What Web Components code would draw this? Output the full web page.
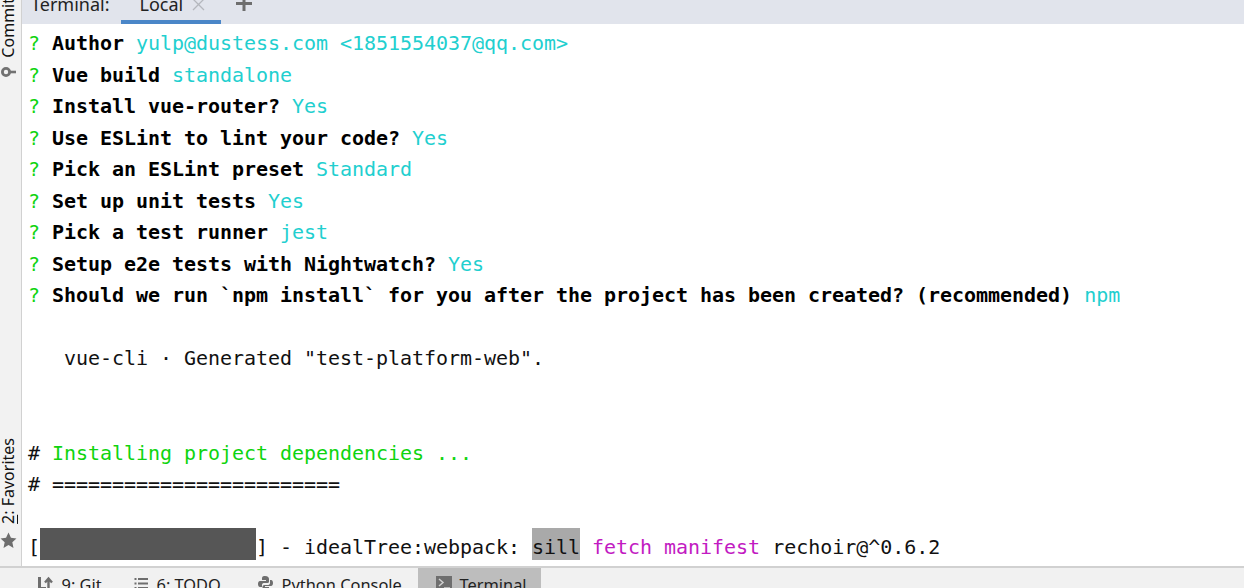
<!DOCTYPE html>
<html><head><meta charset="utf-8"><style>
html,body{margin:0;padding:0;width:1244px;height:588px;overflow:hidden;background:#fff}
</style></head><body>
<ide-frame>
  <side-bar slot="side"></side-bar>
  <top-tabs slot="top"></top-tabs>
  <term-view slot="main">
    <term-line><i class="g">?</i> <b>Author</b> <i class="c">yulp@dustess.com &lt;1851554037@qq.com&gt;</i></term-line>
    <term-line><i class="g">?</i> <b>Vue build</b> <i class="c">standalone</i></term-line>
    <term-line><i class="g">?</i> <b>Install vue-router?</b> <i class="c">Yes</i></term-line>
    <term-line><i class="g">?</i> <b>Use ESLint to lint your code?</b> <i class="c">Yes</i></term-line>
    <term-line><i class="g">?</i> <b>Pick an ESLint preset</b> <i class="c">Standard</i></term-line>
    <term-line><i class="g">?</i> <b>Set up unit tests</b> <i class="c">Yes</i></term-line>
    <term-line><i class="g">?</i> <b>Pick a test runner</b> <i class="c">jest</i></term-line>
    <term-line><i class="g">?</i> <b>Setup e2e tests with Nightwatch?</b> <i class="c">Yes</i></term-line>
    <term-line><i class="g">?</i> <b>Should we run `npm install` for you after the project has been created? (recommended)</b> <i class="c">npm</i></term-line>
    <term-line></term-line>
    <term-line>   vue-cli · Generated "test-platform-web".</term-line>
    <term-line></term-line><term-line></term-line>
    <term-line># <i class="g">Installing project dependencies ...</i></term-line>
    <term-line># ========================</term-line>
    <term-line></term-line>
    <term-line>[<i class="bar">                  </i>] - idealTree:webpack: <i class="sill">sill</i> <i class="m">fetch manifest</i> rechoir@^0.6.2</term-line>
  </term-view>
  <bottom-bar slot="bottom"></bottom-bar>
</ide-frame>
<script>
function def(name,html){customElements.define(name,class extends HTMLElement{constructor(){super();this.attachShadow({mode:'open'}).innerHTML=html}})}
def('ide-frame',`<style>
:host{display:grid;grid-template-columns:22px 1fr;grid-template-rows:24px 1fr 22px;width:1244px;height:588px;overflow:hidden;font-family:"Noto Sans",sans-serif}
.s{grid-row:1/3;display:block}.t{display:block}.m{display:block;min-height:0}.b{grid-column:1/3;display:block}
</style><div class="s"><slot name="side"></slot></div><div class="t"><slot name="top"></slot></div><div class="m"><slot name="main"></slot></div><div class="b"><slot name="bottom"></slot></div>`);
def('side-bar',`<style>
:host{display:flex;flex-direction:column;justify-content:space-between;align-items:flex-start;height:100%;box-sizing:border-box;background:#f2f2f2;border-right:1px solid #d1d1d1;overflow:hidden}
.v{writing-mode:vertical-rl;transform:rotate(180deg);font:16px/16px "Noto Sans",sans-serif;color:#111;white-space:nowrap;width:16px}
.top{display:flex;flex-direction:column;align-items:flex-start;margin-top:-2px;gap:7px}
.bot{display:flex;flex-direction:column;align-items:flex-start;gap:8px;padding-bottom:17px}
u{text-decoration:underline}
svg{display:block}
</style><div class="top"><span class="v">Commit</span><svg width="16" height="14" viewBox="0 0 16 14"><circle cx="6" cy="7" r="3.600" fill="none" stroke="#727272" stroke-width="2.800"/><path d="M9 7h7" stroke="#727272" stroke-width="2.600"/></svg></div>
<div class="bot"><span class="v"><u>2</u>: Favorites</span><svg width="17" height="17" viewBox="0 0 16 16"><path d="M8 .5l2.300 5 5.200.6-3.900 3.600 1.100 5.300L8 12.300l-4.700 2.700 1.100-5.300L.5 6.100l5.200-.6z" fill="#6e6e6e"/></svg></div>`);
def('top-tabs',`<style>
:host{display:flex;align-items:flex-start;height:24px;background:#e1e4ec;font:18px/24px "Noto Sans",sans-serif;color:#222;overflow:hidden}
.lbl{margin:-8px 11px 0 9px;white-space:nowrap}
.tab{display:flex;align-items:flex-start;width:100px;height:24px;flex:none;box-sizing:border-box;border-bottom:4px solid #4a86c8;padding-left:19px;gap:9px}
.tab span{margin-top:-8px}
.plus{margin:-2px 0 0 15px}
svg{display:block;flex:none}
</style><span class="lbl">Terminal:</span><div class="tab"><span>Local</span><svg class="x" width="13" height="11" viewBox="0 0 13 11"><path d="M1 -1l11 11M12 -1L1 10" stroke="#b4b7bd" stroke-width="1.300"/></svg></div><svg class="plus" width="16" height="13" viewBox="0 0 16 13"><path d="M8 0v13M0 5.500h16" stroke="#6e6e6e" stroke-width="3"/></svg>`);
def('term-view',`<style>
:host{display:block;height:100%;box-sizing:border-box;background:#fff;padding:4px 0 0 6px;overflow:hidden}
</style><slot></slot>`);
def('term-line',`<style>
:host{display:block;height:31.5px;white-space:pre;font:20px/31.5px "DejaVu Sans Mono",monospace;letter-spacing:-.04px;color:#111}
::slotted(b){font-weight:700;color:#000}
::slotted(i){font-style:normal}
::slotted(.g){color:#0fd40f}
::slotted(.c){color:#22cfcf}
::slotted(.m){color:#c21bc2}
::slotted(.bar),::slotted(.sill){display:inline-block;box-sizing:border-box;height:32px;padding-top:4px;margin-top:-4px;vertical-align:top}
::slotted(.bar){background:#565656}
::slotted(.sill){background:#a9a9a9}
</style><slot></slot>`);
def('bottom-bar',`<style>
:host{display:flex;height:22px;box-sizing:border-box;background:#f1f1f1;border-top:2px solid #d1d1d1;font:16.4px/20px "Noto Sans",sans-serif;color:#222;padding-left:37px;overflow:hidden;white-space:nowrap}
.i{display:flex;gap:7.5px;align-items:flex-start;padding-top:8px;flex:none;box-sizing:border-box}
.i svg{flex:none;display:block}
.i span{margin-top:-1px}
.on{background:#bdbdbd;padding-left:18px;width:123px;margin-left:16px}
</style>
<div class="i" style="width:96px"><svg width="17" height="16" viewBox="0 0 17 16"><path d="M2.500 1v11.500H9" stroke="#6e6e6e" stroke-width="3" fill="none"/><path d="M11.500 14V3M8 6.500L11.500 2.500 15 6.500" stroke="#6e6e6e" stroke-width="2.400" fill="none"/></svg><span>9: Git</span></div>
<div class="i" style="width:124px"><svg width="16" height="16" viewBox="0 0 16 16"><path d="M1.500 3h2M5 3h10M1.500 7.500h2M5 7.500h10M1.500 12h2M5 12h10" stroke="#6e6e6e" stroke-width="2"/></svg><span>6: TODO</span></div>
<div class="i" style="width:145px"><svg width="17" height="16" viewBox="0 0 17 16"><path d="M8 0C5 0 5 1.500 5 3v1h4v1H3C1.500 5 1 6.500 1 8s.5 3 2 3h2V9c0-1.500 1-2 2.500-2h3C12 7 12 6 12 5V3c0-1.500-1-3-4-3z" fill="#6e6e6e"/><path d="M9 15c3 0 3-1.500 3-3v-1H8v-1h6c1.500 0 2-1.500 2-3s-.5-3-2-3h-1v3c0 1.500-1 2-2.500 2h-3C6 9 5.500 10 5.500 11v1c0 1.500 1 3 3.500 3z" fill="#6e6e6e"/></svg><span>Python Console</span></div>
<div class="i on"><svg width="16" height="16" viewBox="0 0 16 16"><rect width="16" height="16" fill="#6e6e6e"/><path d="M3 3l4 3.500L3 10M8 12h6" stroke="#d0d0d0" stroke-width="1.500" fill="none"/></svg><span>Terminal</span></div>`);
</script>
</body></html>
